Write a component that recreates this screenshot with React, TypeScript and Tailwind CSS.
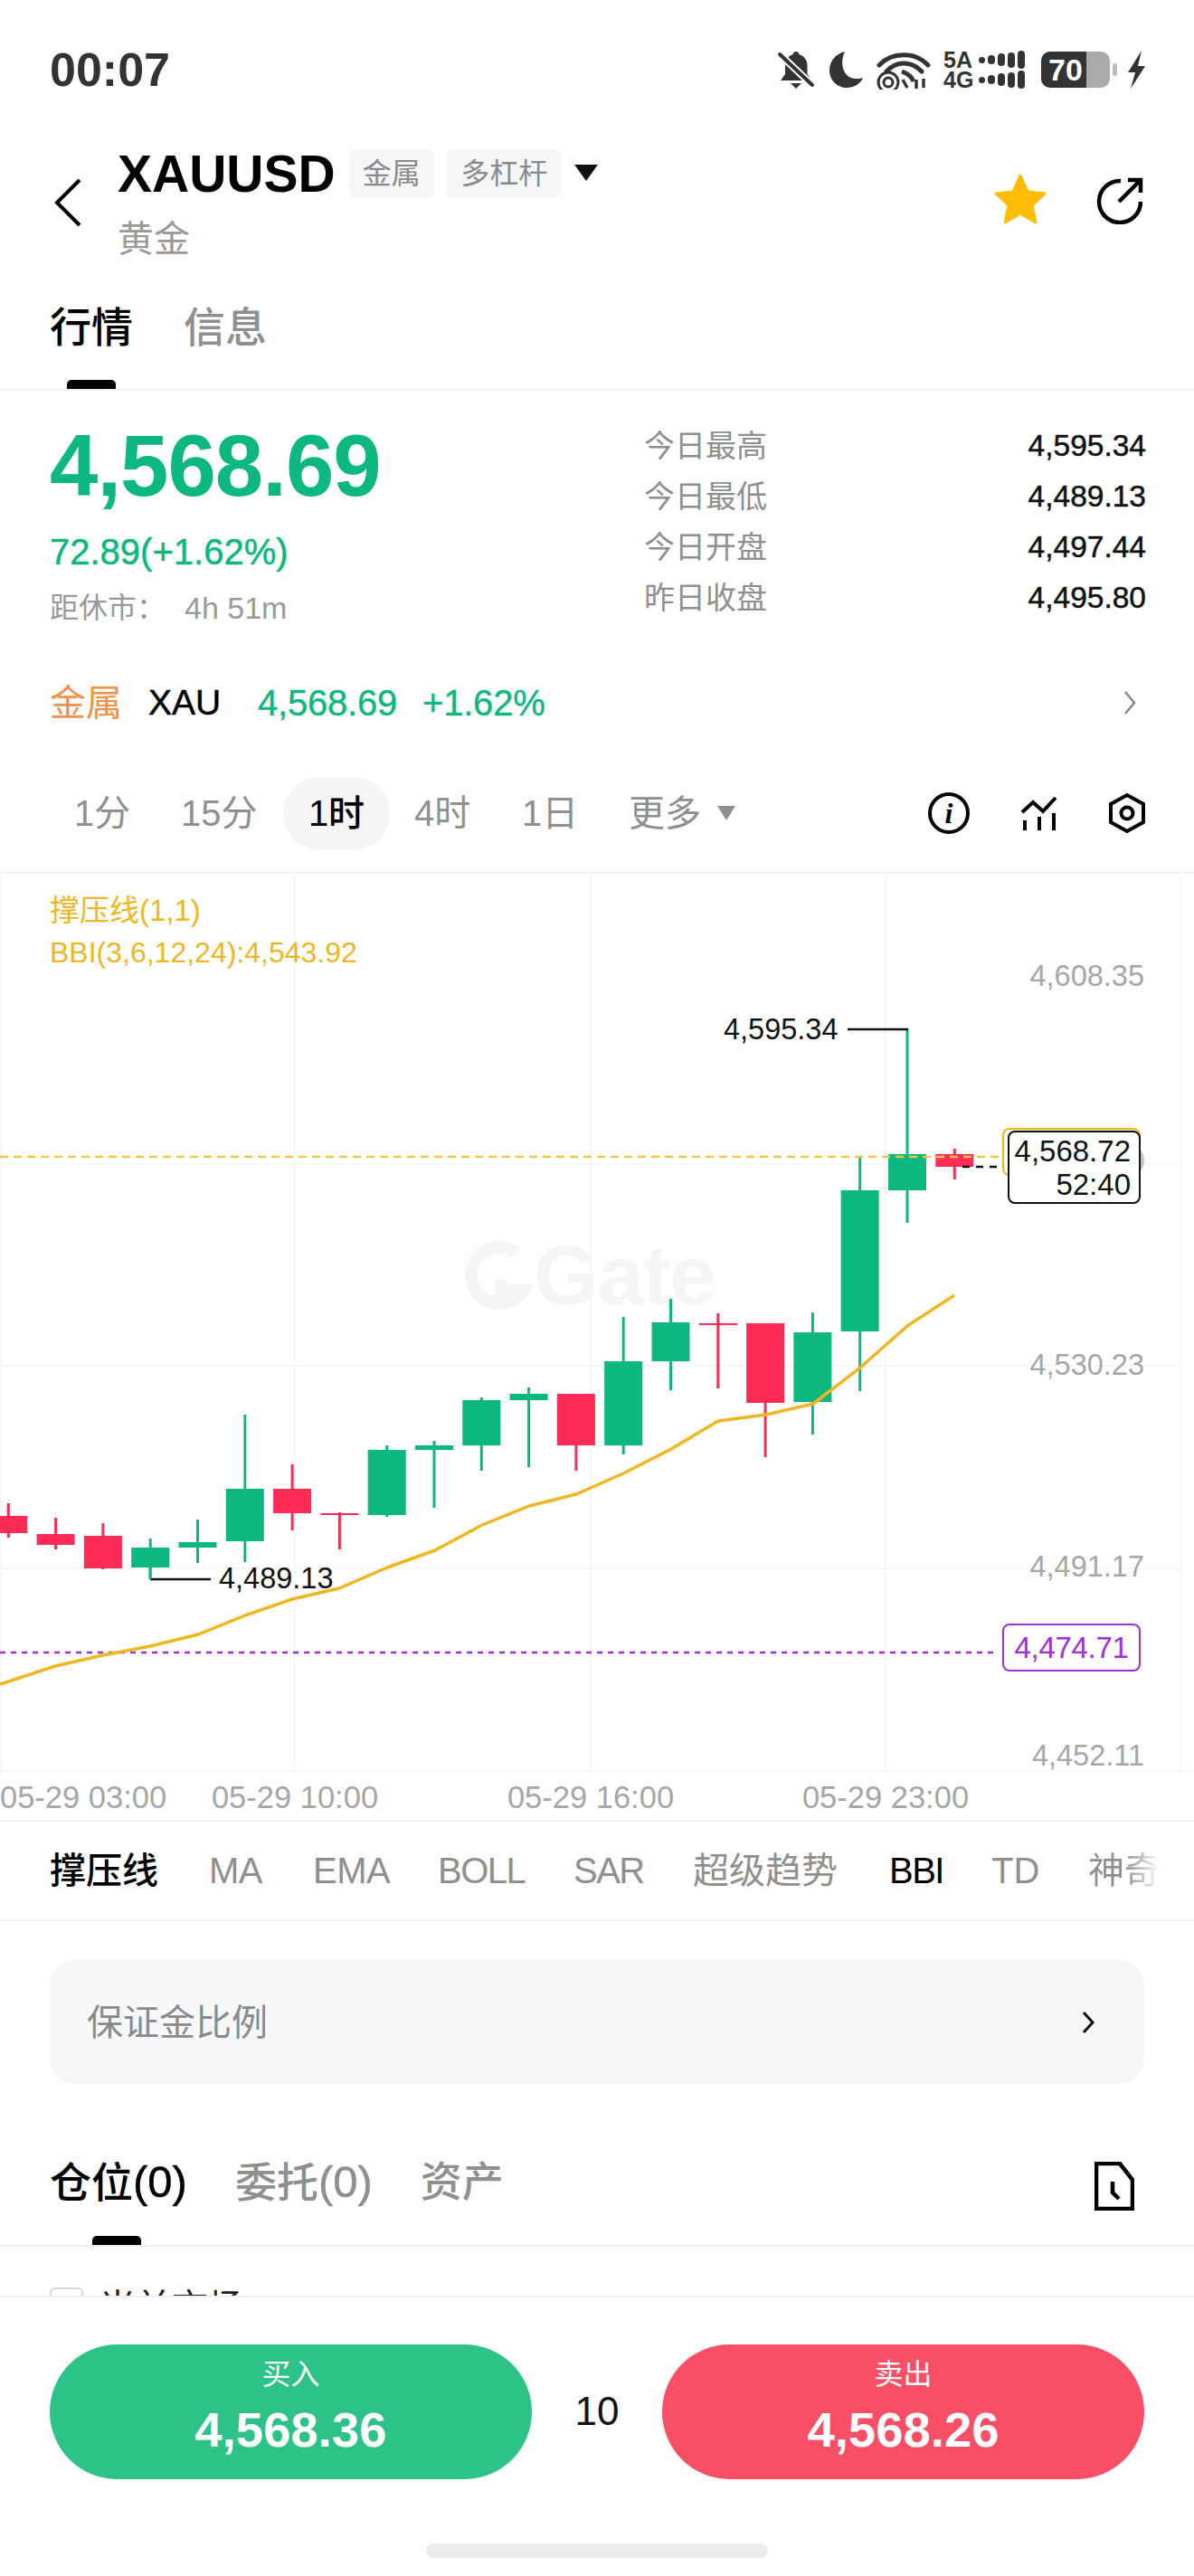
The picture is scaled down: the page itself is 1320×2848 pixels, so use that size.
import React from "react";

const GREEN = "#0cb87f";
const RED = "#fd2c57";
type C = [number, number, number, number, number];
const candles: C[] = [
  [1662, 1700, 1676, 1695, 0],
  [1678, 1713, 1696, 1708, 0],
  [1684, 1735, 1698, 1734, 0],
  [1701, 1746, 1711, 1733, 1],
  [1680, 1728, 1705, 1711, 1],
  [1564, 1727, 1646, 1704, 1],
  [1619, 1692, 1646, 1673, 0],
  [1672, 1713, 1673, 1675, 0],
  [1598, 1677, 1603, 1675, 1],
  [1593, 1667, 1598, 1603, 1],
  [1545, 1626, 1548, 1598, 1],
  [1534, 1622, 1541, 1548, 1],
  [1541, 1626, 1541, 1598, 0],
  [1456, 1608, 1505, 1598, 1],
  [1436, 1537, 1462, 1505, 1],
  [1452, 1535, 1463, 1465, 0],
  [1463, 1611, 1463, 1551, 0],
  [1451, 1586, 1473, 1550, 1],
  [1280, 1538, 1316, 1472, 1],
  [1138, 1352, 1276, 1316, 1],
  [1270, 1304, 1276, 1290, 0],
];
const bbi =
  "0,1862 61,1842 114,1830 166,1820 219,1807 271,1786 323,1768 375,1756 428,1733 481,1714 533,1686 585,1665 637,1652 689,1629 742,1602 794,1571 847,1564 899,1552 951,1512 1003,1466 1055,1432";

function StatusIcons() {
  return (
    <div className="flex items-center gap-[6px] text-[#333]">
      <svg width="42" height="44" viewBox="0 0 42 44" fill="#333">
        <path d="M21 2c2 0 3 1 3.500 3 6 2 9 7 9 13v9l5 7H4l5-7V18C9 12 12 7 17.500 5 18 3 19 2 21 2z" />
        <path d="M15 37h12l-6 6z" />
        <path d="M2 4l38 36" stroke="#fff" strokeWidth="8" />
        <path d="M3 5l36 34" stroke="#333" strokeWidth="4" strokeLinecap="round" />
      </svg>
      <svg width="42" height="42" viewBox="0 0 42 42" fill="#333" className="ml-[8px]">
        <path d="M19 1C8 4 2 12 2 22c0 11 9 19 19 19 8 0 15-4 18-11-3 1-6 1-8 1-12 0-19-15-12-30z" />
      </svg>
      <svg width="60" height="44" viewBox="0 0 60 44" fill="none" stroke="#333" className="ml-[6px]">
        <path d="M3 17C17 2 43 2 57 17" strokeWidth="5" strokeLinecap="round" />
        <path d="M11 24C22 12 38 12 50 24" strokeWidth="5" strokeLinecap="round" />
        <circle cx="13" cy="36" r="11" strokeWidth="3" />
        <circle cx="13" cy="36" r="5" strokeWidth="3" />
        <path d="M28 24c6 2 11 6 13 11" strokeWidth="5" />
        <path d="M29 33l5 9M44 33v10M52 32v10" strokeWidth="3.500" />
      </svg>
      <div className="flex flex-col gap-[2px] ml-[8px]">
        {["5A", "4G"].map((t) => (
          <div key={t} className="flex items-center gap-[3px] h-[20px]">
            <span className="w-[36px] text-[25px] leading-[20px] font-bold text-[#333]">{t}</span>
            <span className="w-[7px] h-[7px] rounded-full bg-[#333]" />
            <span className="w-[8px] h-[10px] rounded-full bg-[#333]" />
            <span className="w-[8px] h-[14px] rounded-full bg-[#333]" />
            <span className="w-[8px] h-[17px] rounded-full bg-[#333]" />
            <span className="w-[8px] h-[20px] rounded-full bg-[#333]" />
          </div>
        ))}
      </div>
      <div className="flex items-center ml-[12px]">
        <div className="flex w-[76px] h-[40px] rounded-[10px] overflow-hidden bg-[#aaa]">
          <div className="w-[50px] h-full bg-[#333]" />
          <span className="-ml-[42px] w-[52px] text-[34px] leading-[40px] font-bold text-white">70</span>
        </div>
        <div className="w-[5px] h-[14px] rounded-full bg-[#bbb] ml-[3px]" />
      </div>
      <svg width="22" height="42" viewBox="0 0 22 42" fill="#333" className="ml-[4px]">
        <path d="M17 0L2 24h8L5 42l16-25h-8z" />
      </svg>
    </div>
  );
}

function Stat({ label, value }: { label: string; value: string }) {
  return (
    <div className="flex items-center justify-between h-[56px]">
      <span className="text-[34px] text-[#8f8f8f]">{label}</span>
      <span className="text-[33.500px] text-[#111] [-webkit-text-stroke:0.5px_#111]">{value}</span>
    </div>
  );
}

export default function App() {
  return (
    <div className="relative w-[1320px] h-[2848px] overflow-hidden bg-white font-['Liberation_Sans','Noto_Sans_CJK_SC',sans-serif]">
      {/* status bar */}
      <div className="flex items-center justify-between h-[154px] pl-[55px] pr-[53px]">
        <span className="text-[52px] font-bold text-[#333] leading-none">00:07</span>
        <StatusIcons />
      </div>

      {/* header */}
      <div className="flex items-start justify-between h-[140px] pl-[60px] pr-[56px]">
        <div className="flex items-center h-[140px]">
          <svg width="30" height="54" viewBox="0 0 30 54" fill="none" stroke="#000" strokeWidth="4">
            <path d="M28 2L3 27l25 25" />
          </svg>
          <div className="ml-[40px] flex flex-col">
            <div className="flex items-center h-[72px]">
              <span className="text-[57px] font-bold text-black leading-none">XAUUSD</span>
              <span className="ml-[15px] flex items-center justify-center w-[94px] h-[54px] rounded-[8px] bg-[#f5f6f7] text-[32px] text-[#8a8a8a]">金属</span>
              <span className="ml-[14px] flex items-center justify-center w-[127px] h-[54px] rounded-[8px] bg-[#f5f6f7] text-[32px] text-[#8a8a8a]">多杠杆</span>
              <svg width="26" height="18" viewBox="0 0 26 18" className="ml-[14px] -mt-[2px]">
                <path d="M0 0h26L13 18z" fill="#111" />
              </svg>
            </div>
            <span className="text-[40px] leading-[56px] mt-[8px] text-[#999]">黄金</span>
          </div>
        </div>
        <div className="flex items-center h-[140px] gap-[54px] pb-[8px]">
          <svg width="60" height="58" viewBox="0 0 60 58">
            <path d="M30 3l8 18 19 2-14 13 4 19-17-10-17 10 4-19L3 23l19-2z" fill="#fdbc05" stroke="#fdbc05" strokeWidth="3" strokeLinejoin="round" />
          </svg>
          <svg width="52" height="52" viewBox="0 0 52 52" fill="none" stroke="#000" strokeWidth="4.500" className="mt-[4px]">
            <path d="M27 4A23 23 0 1 0 49 27" />
            <path d="M25 27L48 4M35 3h14v14" />
          </svg>
        </div>
      </div>

      {/* tabs */}
      <div className="h-[138px] border-b-2 border-[#f0f0f0] pl-[55px] pt-[40px]">
        <div className="flex gap-[56px] h-[56px]">
          <span className="text-[46px] leading-[56px] font-medium text-black">行情</span>
          <span className="text-[46px] leading-[56px] font-medium text-[#8f8f8f]">信息</span>
        </div>
        <div className="mt-[30px] ml-[19px] w-[54px] h-[10px] rounded-t-[5px] bg-black" />
      </div>

      {/* stats */}
      <div className="flex justify-between h-[288px] pl-[55px] pr-[53px]">
        <div className="flex flex-col">
          <span className="text-[96px] font-bold leading-[96px] mt-[35px] tracking-[-1px] text-[#0cb87f]">4,568.69</span>
          <span className="text-[40px] leading-[44px] mt-[25px] text-[#0cb87f] [-webkit-text-stroke:0.5px_#0cb87f]">72.89(+1.62%)</span>
          <div className="flex items-center h-[40px] mt-[20px] text-[32px] text-[#999]">
            <span className="w-[149px]">距休市：</span>
            <span className="text-[34px]">4h 51m</span>
          </div>
        </div>
        <div className="w-[555px] pt-[33px]">
          <Stat label="今日最高" value="4,595.34" />
          <Stat label="今日最低" value="4,489.13" />
          <Stat label="今日开盘" value="4,497.44" />
          <Stat label="昨日收盘" value="4,495.80" />
        </div>
      </div>

      {/* metal row */}
      <div className="flex items-center h-[114px] pl-[55px] pr-[64px]">
        <span className="text-[40px] text-[#f2924a] w-[109px]">金属</span>
        <span className="text-[39px] text-black w-[121px] [-webkit-text-stroke:0.5px_#000]">XAU</span>
        <span className="text-[40px] text-[#0cb87f] w-[182px] tracking-[-0.2px] [-webkit-text-stroke:0.4px_#0cb87f]">4,568.69</span>
        <span className="text-[40px] text-[#0cb87f] tracking-[-0.2px] [-webkit-text-stroke:0.4px_#0cb87f]">+1.62%</span>
        <svg width="14" height="26" viewBox="0 0 14 26" fill="none" stroke="#888" strokeWidth="2.500" className="ml-auto">
          <path d="M2 1l10 12L2 25" />
        </svg>
      </div>

      {/* timeframes */}
      <div className="flex items-center h-[132px] border-b-2 border-[#f2f2f2] pl-[82px] pr-[53px] text-[40px] text-[#8f8f8f]">
        <span className="w-[118px]">1分</span>
        <span className="w-[113px]">15分</span>
        <span className="flex items-center justify-center w-[118px] h-[81px] rounded-full bg-[#f5f5f5] text-black font-medium">1时</span>
        <span className="ml-[27px] w-[119px]">4时</span>
        <span className="w-[118px]">1日</span>
        <span>更多</span>
        <svg width="20" height="16" viewBox="0 0 20 16" className="ml-[18px]"><path d="M0 0h20L10 16z" fill="#8f8f8f" /></svg>
        <div className="ml-auto flex items-center gap-[56px] text-black">
          <svg width="48" height="48" viewBox="0 0 48 48" fill="none">
            <circle cx="24" cy="24" r="21" stroke="#000" strokeWidth="4" />
            <text x="24" y="35" textAnchor="middle" fontSize="32" fontStyle="italic" fontWeight="700" fontFamily="'Liberation Serif',serif" fill="#000">i</text>
          </svg>
          <svg width="40" height="40" viewBox="0 0 40 40" fill="none" stroke="#000" strokeWidth="4">
            <path d="M1 19l12-11 11 10L38 3" />
            <path d="M4 28v11M20 24v15M36 20v19" />
          </svg>
          <svg width="42" height="46" viewBox="0 0 42 46" fill="none" stroke="#000" strokeWidth="4">
            <path d="M21 3l18 10v20L21 43 3 33V13z" />
            <circle cx="21" cy="23" r="6.500" />
          </svg>
        </div>
      </div>

      {/* chart */}
      <div className="relative h-[1048px] border-b-2 border-[#f2f2f2] overflow-hidden">
        <span className="absolute left-[590px] top-[398px] text-[92px] leading-[92px] font-bold text-[#f4f5f6] tracking-[-1px]">Gate</span>
        <svg width="1320" height="1048" viewBox="0 966 1320 1048" className="absolute inset-0">
          <g stroke="#f7f7f8" strokeWidth="2">
            <path d="M1 966V1958M326 966V1958M653 966V1958M979 966V1958M1305 966V1958" />
            <path d="M0 1287H1305M0 1510H1305M0 1734H1305M0 1958H1320" />
          </g>
          <path d="M570 1385a31 31 0 1 0 8 42h-24v-12" fill="none" stroke="#f4f5f6" strokeWidth="14" />
          <path d="M0 1827H1104" stroke="#a12ed6" strokeWidth="2.500" strokeDasharray="6 6" />
          {candles.map(([wt, wb, bt, bb, g], i) => {
            const x = 9.3 + 52.3 * i;
            const col = g ? GREEN : RED;
            return (
              <g key={i} fill={col}>
                <rect x={x - 1.5} y={wt} width="3" height={wb - wt} />
                <rect x={x - 21} y={bt} width="42" height={bb - bt} />
              </g>
            );
          })}
          <polyline points={bbi} fill="none" stroke="#eeb61f" strokeWidth="3.500" strokeLinejoin="round" />
          <path d="M0 1279H1108" stroke="#f2c544" strokeWidth="2.500" strokeDasharray="9 6" />
          <path d="M937 1138H1004" stroke="#111" strokeWidth="2.500" />
          <path d="M166 1746H233" stroke="#111" strokeWidth="2.500" />
          <path d="M166 1733V1746" stroke={GREEN} strokeWidth="3" />
          <path d="M1064 1290H1114" stroke="#111" strokeWidth="2.500" strokeDasharray="8 7" />
          <path d="M1261 1272c3 3 4 7 4 11s-1 8-4 11z" fill="#c4c4c4" />
        </svg>

        <span className="absolute left-[55px] top-[21px] h-[40px] text-[33px] leading-[40px] text-[#eeb61f]">撑压线(1,1)</span>
        <span className="absolute left-[55px] top-[67px] h-[40px] text-[32px] leading-[40px] text-[#eeb61f]">BBI(3,6,12,24):4,543.92</span>

        <span className="absolute right-[55px] top-[93px] h-[40px] text-[32.500px] leading-[40px] text-[#a6a6a6]">4,608.35</span>
        <span className="absolute right-[55px] top-[523px] h-[40px] text-[32.500px] leading-[40px] text-[#a6a6a6]">4,530.23</span>
        <span className="absolute right-[55px] top-[746px] h-[40px] text-[32.500px] leading-[40px] text-[#a6a6a6]">4,491.17</span>
        <span className="absolute right-[55px] top-[955px] h-[40px] text-[32.500px] leading-[40px] text-[#a6a6a6]">4,452.11</span>

        <span className="absolute left-[800px] top-[152px] h-[40px] text-[32.500px] leading-[40px] text-[#111]">4,595.34</span>
        <span className="absolute left-[242px] top-[759px] h-[40px] text-[32.500px] leading-[40px] text-[#111]">4,489.13</span>

        <div className="absolute left-[1108px] top-[281px] w-[153px] h-[53px] rounded-[8px] border-2 border-[#f0b90b] bg-white" />
        <div className="absolute left-[1114px] top-[284px] w-[147px] h-[81px] rounded-[8px] border-2 border-[#111] bg-white flex flex-col items-end pr-[9px] pt-[2px] text-[33px] leading-[37px] text-[#111]">
          <span>4,568.72</span>
          <span>52:40</span>
        </div>
        <div className="absolute left-[1108px] top-[829px] w-[153px] h-[53px] rounded-[8px] border-2 border-[#a12ed6] bg-white flex items-center justify-center text-[33px] text-[#a12ed6] tracking-[-0.3px]">
          4,474.71
        </div>

        <span className="absolute left-0 top-[1001px] h-[40px] text-[34.500px] leading-[40px] text-[#a6a6a6] whitespace-nowrap">05-29 03:00</span>
        <span className="absolute left-[326px] -translate-x-1/2 top-[1001px] h-[40px] text-[34.500px] leading-[40px] text-[#a6a6a6] whitespace-nowrap">05-29 10:00</span>
        <span className="absolute left-[653px] -translate-x-1/2 top-[1001px] h-[40px] text-[34.500px] leading-[40px] text-[#a6a6a6] whitespace-nowrap">05-29 16:00</span>
        <span className="absolute left-[979px] -translate-x-1/2 top-[1001px] h-[40px] text-[34.500px] leading-[40px] text-[#a6a6a6] whitespace-nowrap">05-29 23:00</span>
      </div>

      {/* indicators */}
      <div className="flex items-center h-[110px] border-b-2 border-[#f2f2f2] pl-[55px] text-[40px] text-[#8f8f8f] whitespace-nowrap overflow-hidden">
        <span className="w-[176px] text-black font-medium">撑压线</span>
        <span className="w-[115px] tracking-[-0.5px]">MA</span>
        <span className="w-[138px] tracking-[-0.5px]">EMA</span>
        <span className="w-[150px] tracking-[-1.5px]">BOLL</span>
        <span className="w-[132px] tracking-[-1.5px]">SAR</span>
        <span className="w-[217px]">超级趋势</span>
        <span className="w-[113px] text-black tracking-[-1.5px]">BBI</span>
        <span className="w-[107px]">TD</span>
        <span className="w-[80px] bg-clip-text text-transparent bg-gradient-to-r from-[#8f8f8f] from-50% to-[#ffffff]">神奇</span>
      </div>

      {/* margin */}
      <div className="h-[206px] pt-[43px] px-[55px]">
        <div className="flex items-center justify-between h-[137px] rounded-[28px] bg-[#f5f7f8] pl-[41px] pr-[55px]">
          <span className="text-[40px] text-[#8a8a8a]">保证金比例</span>
          <svg width="14" height="24" viewBox="0 0 14 24" fill="none" stroke="#111" strokeWidth="3"><path d="M2 1l10 11L2 23" /></svg>
        </div>
      </div>

      {/* position tabs */}
      <div className="relative h-[154px] border-b-2 border-[#f0f0f0] pl-[55px] pr-[66px] pt-[54px]">
        <div className="flex items-start justify-between">
          <div className="flex gap-[53px] text-[46px] leading-[56px] font-medium text-[#8f8f8f]">
            <span className="text-black">仓位<span className="text-[49px] [-webkit-text-stroke:0.5px_#000]">(0)</span></span>
            <span>委托<span className="text-[49px] [-webkit-text-stroke:0.5px_#8f8f8f]">(0)</span></span>
            <span>资产</span>
          </div>
          <svg width="44" height="54" viewBox="0 0 44 54" fill="none" stroke="#000" strokeWidth="4.500" className="mt-[6px]">
            <path d="M2 2h26l14 18v32H2z" />
            <path d="M20 22v12l7 7" />
          </svg>
        </div>
        <div className="absolute left-[102px] bottom-0 w-[54px] h-[10px] rounded-t-[5px] bg-black" />
      </div>

      {/* list sliver */}
      <div className="h-[54px] overflow-hidden pl-[55px] pt-[45px]">
        <div className="flex items-start gap-[18px]">
          <div className="w-[37px] h-[37px] rounded-[6px] border-2 border-[#d8d8d8]" />
          <span className="text-[40px] leading-[48px] -mt-[2px] text-[#222]">当前市场</span>
        </div>
      </div>

      {/* bottom bar */}
      <div className="h-[310px] border-t-2 border-[#f0f0f0] pt-[52px] px-[55px] bg-white">
        <div className="flex items-center justify-between h-[149px]">
          <div className="flex flex-col items-center w-[533px] h-[149px] rounded-full bg-[#2dc287] text-white pt-[15px]">
            <span className="text-[32px] leading-[36px]">买入</span>
            <span className="text-[54.500px] leading-[60px] mt-[14px] font-bold">4,568.36</span>
          </div>
          <span className="text-[44px] text-[#111] -mt-[2px]">10</span>
          <div className="flex flex-col items-center w-[533px] h-[149px] rounded-full bg-[#f84e66] text-white pt-[15px]">
            <span className="text-[32px] leading-[36px]">卖出</span>
            <span className="text-[54.500px] leading-[60px] mt-[14px] font-bold">4,568.26</span>
          </div>
        </div>
        <div className="mx-auto mt-[71px] w-[378px] h-[16px] rounded-full bg-[#ececec]" />
      </div>
    </div>
  );
}
